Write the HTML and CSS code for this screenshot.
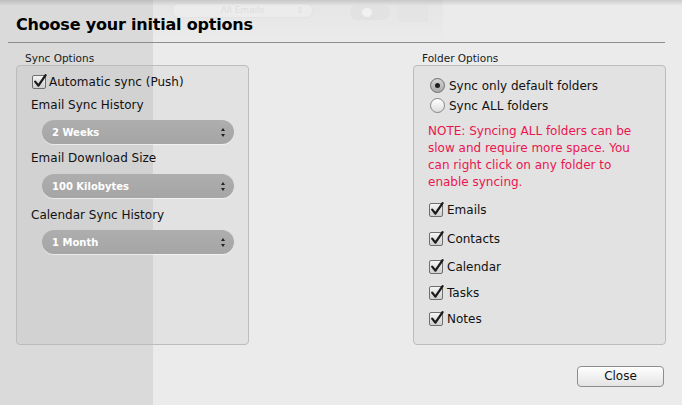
FILE: index.html
```html
<!DOCTYPE html>
<html>
<head>
<meta charset="utf-8">
<link rel="stylesheet" href="styles.css">
</head>
<body>
<div class="ghost">
  <div class="ghost-search"><span>All Emails</span><span class="ghost-chev">&#x2195;</span></div>
  <div class="ghost-toggle"><span class="ghost-dot"></span></div>
  <div class="ghost-pencil"></div>
</div>
<div class="topshade"></div>
<div class="sheet">
  <div class="title-bar"><h1 class="title">Choose your initial options</h1></div>
  <div class="columns">
    <div class="col col-left">
      <div class="group-label">Sync Options</div>
      <div class="group group-left">
        <div class="check-row first-check">
          <span class="cb"><svg class="tick" viewBox="0 0 16 16" width="16" height="16"><path d="M3.2 7.6 L6.4 11.6 L13.6 1.2" fill="none" stroke="#1b1b1b" stroke-width="2.3" stroke-linecap="round" stroke-linejoin="round"/></svg></span>
          <span class="label">Automatic sync (Push)</span>
        </div>
        <div class="text-row r-email-sync">Email Sync History</div>
        <div class="popup p1"><span>2 Weeks</span><span class="arrows"><i class="up"></i><i class="down"></i></span></div>
        <div class="text-row r-download">Email Download Size</div>
        <div class="popup p2"><span>100 Kilobytes</span><span class="arrows"><i class="up"></i><i class="down"></i></span></div>
        <div class="text-row r-calendar">Calendar Sync History</div>
        <div class="popup p3"><span>1 Month</span><span class="arrows"><i class="up"></i><i class="down"></i></span></div>
      </div>
    </div>
    <div class="col col-right">
      <div class="group-label">Folder Options</div>
      <div class="group group-right">
        <div class="radio-row"><span class="rb on"></span><span class="label">Sync only default folders</span></div>
        <div class="radio-row"><span class="rb"></span><span class="label">Sync ALL folders</span></div>
        <p class="note">NOTE: Syncing ALL folders can be<br>slow and require more space. You<br>can right click on any folder to<br>enable syncing.</p>
        <div class="check-row fc f1">
          <span class="cb"><svg class="tick" viewBox="0 0 16 16" width="16" height="16"><path d="M3.2 7.6 L6.4 11.6 L13.6 1.2" fill="none" stroke="#1b1b1b" stroke-width="2.3" stroke-linecap="round" stroke-linejoin="round"/></svg></span>
          <span class="label">Emails</span>
        </div>
        <div class="check-row fc f2">
          <span class="cb"><svg class="tick" viewBox="0 0 16 16" width="16" height="16"><path d="M3.2 7.6 L6.4 11.6 L13.6 1.2" fill="none" stroke="#1b1b1b" stroke-width="2.3" stroke-linecap="round" stroke-linejoin="round"/></svg></span>
          <span class="label">Contacts</span>
        </div>
        <div class="check-row fc f3">
          <span class="cb"><svg class="tick" viewBox="0 0 16 16" width="16" height="16"><path d="M3.2 7.6 L6.4 11.6 L13.6 1.2" fill="none" stroke="#1b1b1b" stroke-width="2.3" stroke-linecap="round" stroke-linejoin="round"/></svg></span>
          <span class="label">Calendar</span>
        </div>
        <div class="check-row fc f4">
          <span class="cb"><svg class="tick" viewBox="0 0 16 16" width="16" height="16"><path d="M3.2 7.6 L6.4 11.6 L13.6 1.2" fill="none" stroke="#1b1b1b" stroke-width="2.3" stroke-linecap="round" stroke-linejoin="round"/></svg></span>
          <span class="label">Tasks</span>
        </div>
        <div class="check-row fc f5">
          <span class="cb"><svg class="tick" viewBox="0 0 16 16" width="16" height="16"><path d="M3.2 7.6 L6.4 11.6 L13.6 1.2" fill="none" stroke="#1b1b1b" stroke-width="2.3" stroke-linecap="round" stroke-linejoin="round"/></svg></span>
          <span class="label">Notes</span>
        </div>
      </div>
    </div>
  </div>
  <div class="footer"><button class="btn">Close</button></div>
</div>
</body>
</html>
```

FILE: styles.css
```css
html, body {
  margin: 0;
  padding: 0;
}
body {
  width: 682px;
  height: 405px;
  overflow: hidden;
  position: relative;
  font-family: "DejaVu Sans", "Liberation Sans", sans-serif;
  font-size: 12px;
  color: #111;
  background: linear-gradient(to right, #dadada 0, #dadada 153px, #ebebeb 153px, #ebebeb 100%);
}
.ghost {
  position: absolute;
  left: 153px;
  top: 0;
  width: 290px;
  height: 40px;
  background: linear-gradient(#e5e5e5, #e8e8e8 60%, #ebebeb);
}
.ghost-search {
  position: absolute;
  left: 19px;
  top: 3px;
  width: 139px;
  height: 13px;
  border-radius: 7px;
  background: #ececec;
  border: 1px solid #e3e3e3;
  font-size: 9px;
  line-height: 13px;
  color: #dddddd;
  text-align: center;
}
.ghost-chev {
  position: absolute;
  right: 8px;
  top: 0;
  color: #e0e0e0;
}
.ghost-toggle {
  position: absolute;
  left: 197px;
  top: 5px;
  width: 40px;
  height: 15px;
  border-radius: 8px;
  background: #e2e2e2;
}
.ghost-dot {
  position: absolute;
  left: 12px;
  top: 3px;
  width: 10px;
  height: 9px;
  border-radius: 50%;
  background: #f1f1f1;
}
.ghost-pencil {
  position: absolute;
  left: 245px;
  top: 3px;
  width: 30px;
  height: 19px;
  background: #e4e4e4;
  border-radius: 2px;
}
.topshade {
  position: absolute;
  left: 0;
  top: 0;
  width: 682px;
  height: 6px;
  background: linear-gradient(rgba(0,0,0,0.13), rgba(0,0,0,0));
}
.sheet {
  position: relative;
}
.title-bar {
  margin: 0 17px 0 8px;
  padding: 15px 0 0 8px;
  height: 27px;
  border-bottom: 1px solid #8e8e8e;
}
.title {
  margin: 0;
  font-size: 16px;
  line-height: 20px;
  font-weight: bold;
  color: #000;
  letter-spacing: -0.2px;
}
.columns {
  display: flex;
  justify-content: space-between;
  padding: 0 16px;
  margin-top: 9px;
}
.col-left { width: 233px; }
.col-right { width: 253px; }
.group-label {
  font-size: 10.5px;
  line-height: 13px;
  margin-left: 9px;
  color: #1a1a1a;
}
.group {
  box-sizing: border-box;
  height: 280px;
  border: 1px solid #bcbcbc;
  border-radius: 4px;
  background: rgba(0,0,0,0.035);
}
.group-left {
  padding: 7px 0 0 0;
}
.check-row {
  display: flex;
  align-items: center;
  height: 18px;
  line-height: 18px;
}
.first-check { padding-left: 15px; }
.first-check .label { margin-left: 3px; }
.cb {
  position: relative;
  box-sizing: border-box;
  width: 14px;
  height: 14px;
  border: 1px solid #6f6f6f;
  border-radius: 2px;
  background: linear-gradient(#f4f4f4, #cfcfcf);
  flex: none;
}
.tick {
  position: absolute;
  left: -1px;
  top: -2px;
  overflow: visible;
}
.text-row {
  height: 18px;
  line-height: 18px;
  padding-left: 14px;
}
.r-email-sync { margin-top: 5px; }
.r-download { margin-top: 5px; }
.r-calendar { margin-top: 8px; }
.popup {
  position: relative;
  display: flex;
  align-items: center;
  justify-content: space-between;
  box-sizing: border-box;
  width: 192px;
  height: 24px;
  margin-left: 25px;
  padding: 0 9px 0 10px;
  border-radius: 12px;
  background: linear-gradient(#aeaeae, #a5a5a5);
  box-shadow: 0 1px 0 rgba(255,255,255,0.55);
  color: #fff;
  font-weight: bold;
  font-size: 10px;
}
.p1 { margin-top: 6px; }
.p2 { margin-top: 7px; }
.p3 { margin-top: 6px; }
.arrows {
  display: flex;
  flex-direction: column;
  align-items: center;
  gap: 3px;
}
.arrows i {
  display: block;
  width: 0;
  height: 0;
  border-left: 2.5px solid transparent;
  border-right: 2.5px solid transparent;
}
.arrows .up { border-bottom: 3.5px solid #222; }
.arrows .down { border-top: 3.5px solid #222; }
.group-right {
  padding: 10px 0 0 0;
}
.radio-row {
  display: flex;
  align-items: center;
  height: 20px;
  line-height: 20px;
  padding-left: 16px;
}
.radio-row .label { margin-left: 4px; }
.rb {
  position: relative;
  box-sizing: border-box;
  width: 15px;
  height: 15px;
  border-radius: 50%;
  border: 1px solid #858585;
  background: linear-gradient(#ffffff, #dedede);
  margin-top: -1px;
  flex: none;
}
.rb.on {
  background: linear-gradient(#d4d4d4, #a9a9a9);
  border-color: #6e6e6e;
}
.rb.on::after {
  content: "";
  position: absolute;
  left: 4px;
  top: 4px;
  width: 5px;
  height: 5px;
  border-radius: 50%;
  background: #1e1e1e;
}
.note {
  margin: 7px 0 0 0;
  padding-left: 14px;
  color: #ea1550;
  line-height: 17.1px;
  white-space: nowrap;
}
.fc { padding-left: 15px; }
.fc .label { margin-left: 4px; }
.f1 { margin-top: 10px; }
.f2 { margin-top: 11px; }
.f3 { margin-top: 10px; }
.f4 { margin-top: 8px; }
.f5 { margin-top: 8px; }
.footer {
  display: flex;
  justify-content: flex-end;
  padding-right: 18px;
  margin-top: 21px;
}
.btn {
  box-sizing: border-box;
  width: 87px;
  height: 21px;
  padding: 0;
  border: 1px solid #8d8d8d;
  border-radius: 4px;
  background: linear-gradient(#ffffff, #f1f1f1 50%, #e4e4e4);
  font-family: "DejaVu Sans", "Liberation Sans", sans-serif;
  font-size: 12px;
  line-height: 19px;
  color: #111;
}
```
